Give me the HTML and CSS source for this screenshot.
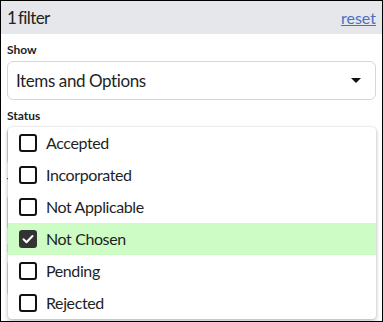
FILE: index.html
```html
<!DOCTYPE html>
<html lang="en">
<head>
    <meta charset="UTF-8">
    <meta name="viewport" content="width=device-width, initial-scale=1.0">
    <title>Filters</title>
    <link rel="stylesheet" href="styles.css">
</head>
<body>
    <div class="panel">
        <header class="panel-header">
            <span class="filter-count">1 filter</span>
            <a href="#" class="reset-link">reset</a>
        </header>

        <div class="panel-body">
            <div class="field">
                <label class="field-label">Show</label>
                <div class="select">
                    <span>Items and Options</span>
                    <span class="caret"></span>
                </div>
            </div>

            <div class="field">
                <label class="field-label">Status</label>
                <div class="select-wrap">
                    <div class="select"></div>
                    <ul class="menu">
                        <li class="menu-item"><span class="checkbox"></span>Accepted</li>
                        <li class="menu-item"><span class="checkbox"></span>Incorporated</li>
                        <li class="menu-item"><span class="checkbox"></span>Not Applicable</li>
                        <li class="menu-item selected">
                            <span class="checkbox checked">
                                <svg viewBox="0 0 18 18" width="18" height="18"><path d="M4.5 9.2l3 3 6-6.2" fill="none" stroke="#fff" stroke-width="2" stroke-linecap="round" stroke-linejoin="round"/></svg>
                            </span>Not Chosen
                        </li>
                        <li class="menu-item"><span class="checkbox"></span>Pending</li>
                        <li class="menu-item"><span class="checkbox"></span>Rejected</li>
                    </ul>
                </div>
            </div>

            <div class="field">
                <label class="field-label">Type</label>
                <div class="select"></div>
            </div>

            <div class="field">
                <label class="field-label">Room</label>
                <div class="select"></div>
            </div>
        </div>
    </div>
</body>
</html>
```

FILE: styles.css
```css
* {
    margin: 0;
    padding: 0;
    box-sizing: border-box;
}

body {
    font-family: Lato, 'Liberation Sans', sans-serif;
    color: #1f1f1f;
    background: #fff;
}

.panel {
    width: 383px;
    height: 322px;
    border: 1px solid #000;
    overflow: hidden;
}

/* Header */
.panel-header {
    height: 33px;
    padding: 0 6px;
    background: #e5e7eb;
    display: flex;
    justify-content: space-between;
    align-items: center;
}

.filter-count {
    font-size: 17px;
    letter-spacing: -0.6px;
    word-spacing: -2px;
    color: #222;
}

.reset-link {
    font-size: 16px;
    color: #4a6fc4;
    text-decoration: underline;
}

/* Fields */
.panel-body {
    padding: 0 6px;
}

.field {
    margin-top: 8px;
}

.field-label {
    display: block;
    font-size: 12px;
    font-weight: 700;
    line-height: 16px;
    margin-bottom: 3px;
    color: #222;
}

.select {
    height: 39px;
    border: 1px solid #d3d7dc;
    border-radius: 6px;
    padding: 0 14px 0 8px;
    display: flex;
    justify-content: space-between;
    align-items: center;
    font-size: 17px;
    letter-spacing: -0.4px;
    color: #1f1f1f;
}

.caret {
    width: 0;
    height: 0;
    border-left: 5px solid transparent;
    border-right: 5px solid transparent;
    border-top: 5px solid #111;
}

/* Dropdown menu */
.select-wrap {
    position: relative;
}

.menu {
    position: absolute;
    top: 0;
    left: 1px;
    right: 0;
    list-style: none;
    background: #fff;
    border-radius: 4px;
    box-shadow: 0 2px 4px rgba(0,0,0,0.25), 0 0 2px rgba(0,0,0,0.15);
    overflow: hidden;
    z-index: 2;
}

.menu-item {
    height: 32px;
    display: flex;
    align-items: center;
    gap: 9px;
    padding-left: 11px;
    padding-bottom: 1px;
    font-size: 16px;
    letter-spacing: -0.4px;
    color: #1f1f1f;
}

.menu-item.selected {
    background: #cdfcc5;
}

.checkbox {
    width: 18px;
    height: 18px;
    border: 2px solid #111;
    border-radius: 3px;
    flex-shrink: 0;
    display: flex;
}

.checkbox.checked {
    border: none;
    background: #333;
}
```
